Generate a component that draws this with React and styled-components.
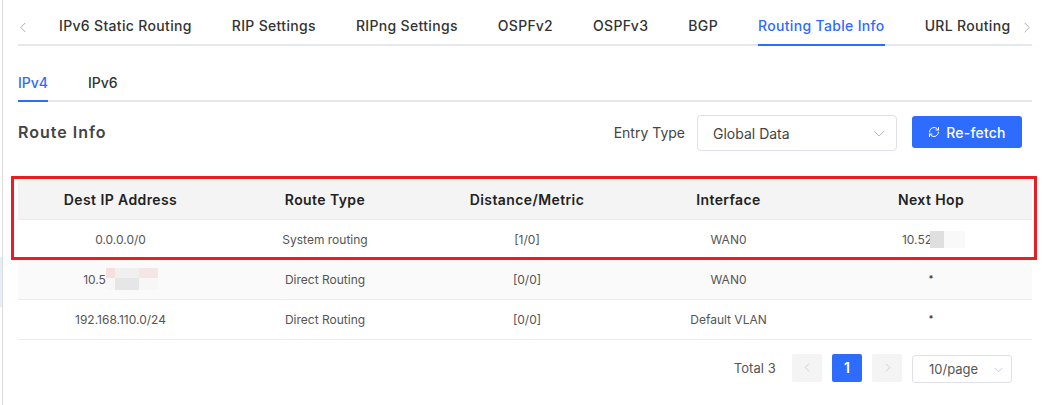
import React from "react"
import styled, { createGlobalStyle } from "styled-components"
import { LuRefreshCw } from "react-icons/lu"

const GlobalStyle = createGlobalStyle`
  html, body {
    margin: 0;
    padding: 0;
    background: #fff;
    font-family: Inter, "Noto Sans", sans-serif;
    overflow: hidden;
  }
`

const topTabs = ["IPv6 Static Routing", "RIP Settings", "RIPng Settings", "OSPFv2", "OSPFv3", "BGP", "Routing Table Info", "URL Routing"]
const columns = ["Dest IP Address", "Route Type", "Distance/Metric", "Interface", "Next Hop"]

const Chevron = ({ dir, size = 11 }) => (
  <ChevronSvg viewBox="0 0 12 12" width={size} height={size} $dir={dir}>
    <polyline points="1,4 6,9 11,4" fill="none" stroke="currentColor" strokeWidth="1" />
  </ChevronSvg>
)

const App = () => {
  const rows = [
    { key: "a", cells: ["0.0.0.0/0", "System routing", "[1/0]", "WAN0", <>10.52<MosaicShort /></>] },
    { key: "b", cells: [<>10.5<MosaicWide /></>, "Direct Routing", "[0/0]", "WAN0", <Asterisk>*</Asterisk>], striped: true },
    { key: "c", cells: ["192.168.110.0/24", "Direct Routing", "[0/0]", "Default VLAN", <Asterisk>*</Asterisk>] },
  ]

  return (
    <>
      <GlobalStyle />
      <Page>
        <TopTabs>
          <Arrow><Chevron dir="left" /></Arrow>
          <TabList>
            {topTabs.map(t => (
              <TopTab key={t} $active={t === "Routing Table Info"}>{t}</TopTab>
            ))}
          </TabList>
          <Arrow><Chevron dir="right" /></Arrow>
        </TopTabs>
        <SubTabs>
          <SubTab $active>IPv4</SubTab>
          <SubTab>IPv6</SubTab>
        </SubTabs>
        <Toolbar>
          <Title>Route Info</Title>
          <Filter>
            <FilterLabel>Entry Type</FilterLabel>
            <Select>
              Global Data
              <Chevron dir="down" size={12} />
            </Select>
            <Button><LuRefreshCw />Re-fetch</Button>
          </Filter>
        </Toolbar>
        <Table>
          <Highlight />
          <HeadRow>
            {columns.map(c => <HeadCell key={c}>{c}</HeadCell>)}
          </HeadRow>
          {rows.map(r => (
            <Row key={r.key} $striped={r.striped}>
              {r.cells.map((c, i) => <Cell key={i}>{c}</Cell>)}
            </Row>
          ))}
        </Table>
        <Pagination>
          <Total>Total 3</Total>
          <PageButton><Chevron dir="left" size={9} /></PageButton>
          <PageButton $active>1</PageButton>
          <PageButton><Chevron dir="right" size={9} /></PageButton>
          <PageSize>
            10/page
            <Chevron dir="down" size={9} />
          </PageSize>
        </Pagination>
      </Page>
    </>
  )
}

export default App

const rotations = { left: 90, right: -90, down: 0 }

const ChevronSvg = styled.svg`
  display: block;
  transform: rotate(${p => rotations[p.$dir]}deg);
`

const Page = styled.div`
  width: 1014px;
  height: 405px;
  margin-left: 18px;
  position: relative;
  &::before {
    content: "";
    position: absolute;
    left: -16px;
    top: 0;
    bottom: 0;
    width: 1px;
    background: #dcdcdc;
  }
  &::after {
    content: "";
    position: absolute;
    left: -18px;
    top: 257px;
    height: 50px;
    width: 2px;
    background: #e8edf8;
  }
`

const TopTabs = styled.div`
  display: flex;
  align-items: center;
  height: 44px;
  border-bottom: 2px solid #e4e7ef;
`

const Arrow = styled.div`
  width: 11px;
  display: flex;
  justify-content: center;
  color: #a8a8a8;
  margin-top: 10px;
`

const TabList = styled.div`
  flex: 1;
  display: flex;
  gap: 40px;
  padding-left: 30px;
  height: 100%;
`

const TopTab = styled.div`
  font-size: 14px;
  font-weight: 500;
  letter-spacing: 0.33px;
  line-height: 52px;
  height: 44px;
  white-space: nowrap;
  color: ${p => (p.$active ? "#2e6bff" : "#333")};
  box-shadow: ${p => (p.$active ? "0 2px 0 #2e6bff" : "none")};
`

const SubTabs = styled.div`
  display: flex;
  gap: 40px;
  height: 54px;
  border-bottom: 2px solid #e4e7ef;
`

const SubTab = styled.div`
  font-size: 14px;
  font-weight: 500;
  line-height: 74px;
  height: 54px;
  color: ${p => (p.$active ? "#2e6bff" : "#333")};
  box-shadow: ${p => (p.$active ? "0 2px 0 #2e6bff" : "none")};
`

const Toolbar = styled.div`
  display: flex;
  justify-content: space-between;
  align-items: center;
  height: 62px;
  margin-bottom: 16px;
  padding-right: 10px;
`

const Title = styled.div`
  font-size: 16px;
  font-weight: 600;
  letter-spacing: 1px;
  color: #444;
  margin-top: -2px;
`

const Filter = styled.div`
  display: flex;
  align-items: center;
`

const FilterLabel = styled.span`
  font-size: 14px;
  color: #444;
  margin-right: 12px;
  margin-top: -2px;
`

const Select = styled.div`
  box-sizing: border-box;
  width: 200px;
  height: 36px;
  padding: 0 11px 0 15px;
  border: 1px solid #dfe1e6;
  border-radius: 4px;
  display: flex;
  align-items: center;
  justify-content: space-between;
  font-size: 14px;
  color: #444;
  margin-right: 15px;
  svg {
    color: #bcbcbc;
  }
`

const Button = styled.div`
  width: 110px;
  height: 32px;
  border-radius: 3px;
  background: #2e6bff;
  color: #fff;
  display: flex;
  align-items: center;
  justify-content: center;
  gap: 6px;
  font-size: 14px;
  font-weight: 500;
  letter-spacing: 0.2px;
  margin-top: -2px;
  svg {
    font-size: 12px;
  }
`

const Table = styled.div`
  position: relative;
`

const Highlight = styled.div`
  position: absolute;
  left: -7px;
  right: -5px;
  top: -4px;
  height: 84px;
  border: 3px solid #ec1c24;
  box-sizing: border-box;
  pointer-events: none;
  z-index: 2;
`

const grid = `
  display: grid;
  grid-template-columns: 205px 204px 200px 203px 202px;
  height: 40px;
  box-sizing: border-box;
  border-bottom: 1px solid #ececec;
  align-items: center;
  text-align: center;
`

const HeadRow = styled.div`
  ${grid}
  background: #f4f4f4;
`

const Row = styled.div`
  ${grid}
  background: ${p => (p.$striped ? "#fafafa" : "#fff")};
`

const HeadCell = styled.div`
  font-size: 14px;
  font-weight: 600;
  letter-spacing: 0.4px;
  color: #222;
`

const Cell = styled.div`
  font-size: 12px;
  color: #555;
  display: flex;
  align-items: center;
  justify-content: center;
`

const Asterisk = styled.span`
  font-size: 9px;
  font-weight: 700;
  color: #444;
  margin-top: -2px;
`

const MosaicWide = styled.span`
  width: 52px;
  height: 22px;
  margin: -6px 0 -4px;
  background:
    linear-gradient(#e6e6e6, #e6e6e6) 9px 10px / 24px 12px no-repeat,
    linear-gradient(#f0f0f0, #f0f0f0) 9px 0 / 24px 10px no-repeat,
    linear-gradient(#f5e6e6, #f5e6e6) 33px 0 / 19px 10px no-repeat,
    linear-gradient(#f8dede, #f8dede) 0 0 / 9px 10px no-repeat,
    #f7f7f7;
`

const MosaicShort = styled.span`
  width: 35px;
  height: 17px;
  margin: 0 -5px 0 -2px;
  background:
    linear-gradient(#dfdfdf, #dfdfdf) 0 0 / 14px 17px no-repeat,
    #f9f9f9;
`

const Pagination = styled.div`
  display: flex;
  align-items: center;
  justify-content: flex-end;
  gap: 10px;
  margin-top: 12px;
  padding-right: 20px;
`

const Total = styled.span`
  font-size: 13px;
  letter-spacing: 0.1px;
  color: #555;
  margin-right: 6px;
`

const PageButton = styled.div`
  width: 30px;
  height: 28px;
  border-radius: 2px;
  display: flex;
  align-items: center;
  justify-content: center;
  font-size: 14px;
  font-weight: 600;
  background: ${p => (p.$active ? "#2e6bff" : "#f4f4f4")};
  color: ${p => (p.$active ? "#fff" : "#c4c4c4")};
`

const PageSize = styled.div`
  box-sizing: border-box;
  width: 100px;
  height: 28px;
  margin-top: 3px;
  padding: 0 8px 0 16px;
  border: 1px solid #dfe1e6;
  border-radius: 3px;
  display: flex;
  align-items: center;
  justify-content: space-between;
  font-size: 13px;
  color: #555;
  svg {
    color: #bcbcbc;
  }
`
